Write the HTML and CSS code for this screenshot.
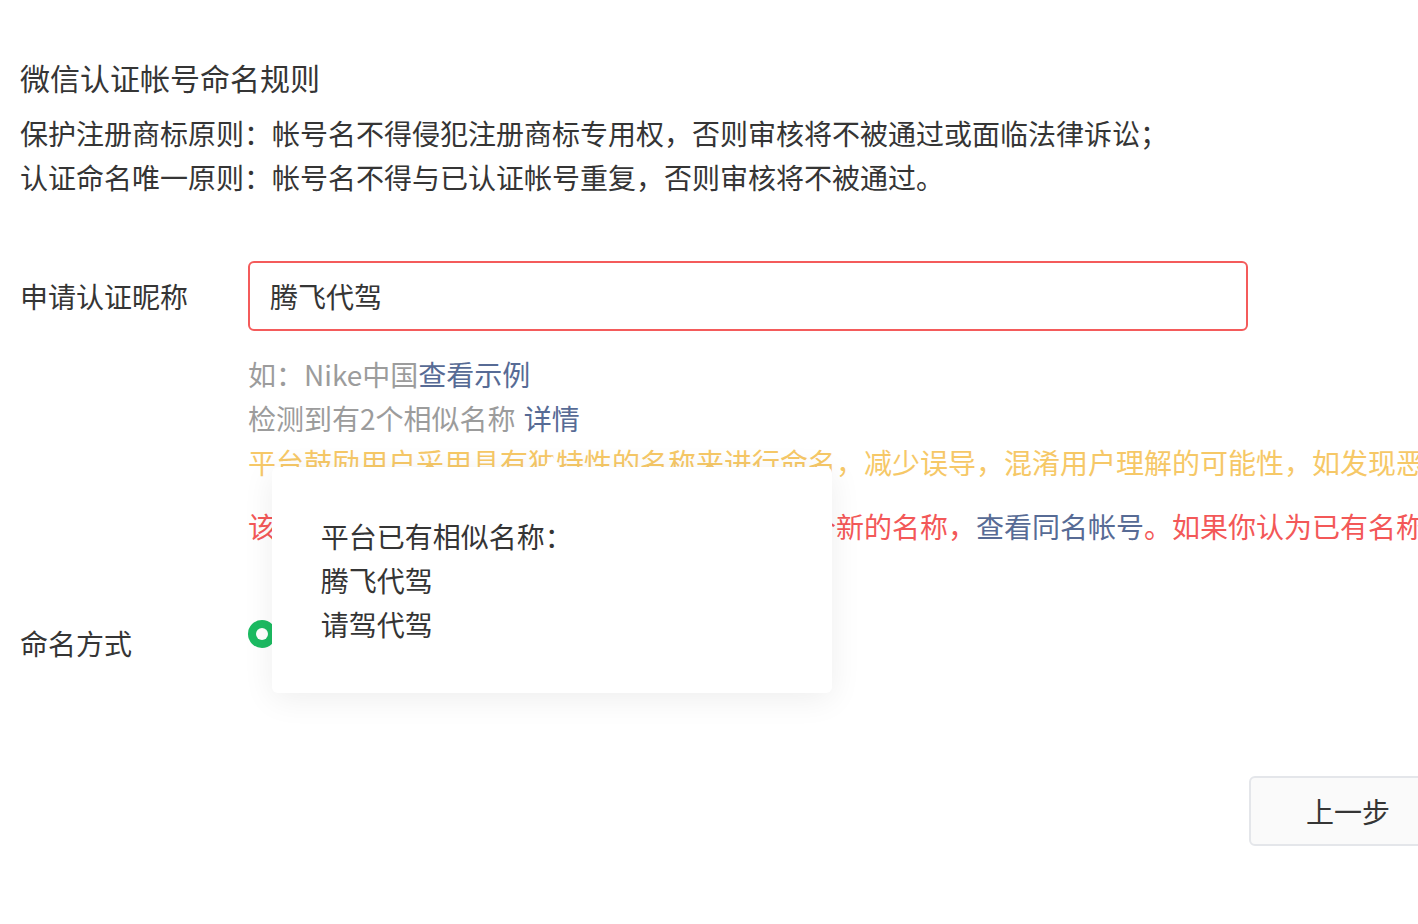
FILE: index.html
```html
<!DOCTYPE html>
<html lang="zh-CN">
<head>
<meta charset="utf-8">
<title>微信认证帐号命名规则</title>
<link rel="stylesheet" href="styles.css">
</head>
<body>
<div class="page">
  <h2 class="title">微信认证帐号命名规则</h2>
  <div class="rules">
    <p>保护注册商标原则：帐号名不得侵犯注册商标专用权，否则审核将不被通过或面临法律诉讼；</p>
    <p>认证命名唯一原则：帐号名不得与已认证帐号重复，否则审核将不被通过。</p>
  </div>

  <div class="form-row">
    <label class="form-label">申请认证昵称</label>
    <div class="form-control">
      <div class="input">腾飞代驾</div>
    </div>
  </div>

  <div class="hints">
    <p class="hint">如：Nike中国<a class="link">查看示例</a></p>
    <p class="hint">检测到有2个相似名称 <span class="anchor"><a class="link">详情</a>
      <span class="popover">
        <span class="popover-line">平台已有相似名称：</span>
        <span class="popover-line">腾飞代驾</span>
        <span class="popover-line">请驾代驾</span>
      </span>
    </span></p>
    <p class="hint warn">平台鼓励用户采用具有独特性的名称来进行命名，减少误导，混淆用户理解的可能性，如发现恶意使用他人名称的行为，平台将依据规则进行处理</p>
    <p class="hint error">该名称与已认证帐号名称重复，请重新设置一个新的名称，<a class="link">查看同名帐号</a>。如果你认为已有名称侵犯了你的合法权益，可以进行投诉</p>
  </div>

  <div class="form-row top">
    <label class="form-label offset">命名方式</label>
    <div class="radio-group">
      <span class="radio"></span>
    </div>
  </div>

  <div class="footer">
    <button class="btn">上一步</button>
    <button class="btn primary">下一步</button>
  </div>
</div>
</body>
</html>
```

FILE: styles.css
```css
html, body {
  margin: 0;
  padding: 0;
  overflow: hidden;
  background: #ffffff;
}

body {
  font-family: "Noto Sans CJK SC", "Noto Sans", sans-serif;
  color: #353535;
  font-size: 28px;
  line-height: 44px;
}

.page {
  padding: 55px 0 0 20px;
  white-space: nowrap;
}

p {
  margin: 0;
}

.title {
  margin: 0;
  font-size: 30px;
  font-weight: normal;
  line-height: 44px;
}

.rules {
  margin-top: 12px;
}

.form-row {
  display: flex;
  align-items: center;
  margin-top: 62px;
}

.form-row.top {
  align-items: flex-start;
  margin-top: 72px;
}

.form-label {
  width: 228px;
  flex: none;
}

.form-label.offset {
  margin-top: 1px;
}

.input {
  width: 1000px;
  height: 70px;
  box-sizing: border-box;
  border: 2px solid #f45b5b;
  border-radius: 6px;
  padding: 0 20px;
  line-height: 66px;
  color: #353535;
}

.hints {
  margin-left: 228px;
  margin-top: 21px;
}

.hint {
  color: #9c9c9c;
}

.link {
  color: #576b95;
  text-decoration: none;
}

.warn {
  color: #f6c867;
}

.error {
  color: #f35858;
  margin-top: 20px;
}

.anchor {
  position: relative;
  display: inline-block;
  margin-left: 2px;
}

.popover {
  position: absolute;
  left: 50%;
  top: 71px;
  transform: translateX(-50%);
  width: 560px;
  height: 226px;
  box-sizing: border-box;
  padding: 47px 49px;
  background: #ffffff;
  border-radius: 6px;
  box-shadow: 0 6px 32px rgba(0, 0, 0, 0.07);
  color: #353535;
  z-index: 10;
  white-space: nowrap;
}

.popover::before {
  content: "";
  position: absolute;
  left: 50%;
  top: -11px;
  margin-left: -8px;
  border-left: 8px solid transparent;
  border-right: 8px solid transparent;
  border-bottom: 11px solid #ffffff;
}

.popover-line {
  display: block;
  line-height: 44px;
}

.radio-group {
  display: flex;
  align-items: center;
  height: 28px;
}

.radio {
  width: 28px;
  height: 28px;
  box-sizing: border-box;
  border-radius: 50%;
  background: #1cbb62;
  display: flex;
  align-items: center;
  justify-content: center;
}

.radio::after {
  content: "";
  width: 12px;
  height: 12px;
  border-radius: 50%;
  background: #ffffff;
}

.footer {
  display: flex;
  gap: 20px;
  margin-top: 111px;
  margin-left: 1229px;
}

.btn {
  flex: none;
  width: 198px;
  height: 70px;
  box-sizing: border-box;
  border: 2px solid #e4e6ea;
  border-radius: 6px;
  background: #fafafa;
  font-family: inherit;
  font-size: 28px;
  color: #353535;
  padding: 0;
}

.btn.primary {
  background: #07c160;
  border-color: #07c160;
  color: #ffffff;
}
```
